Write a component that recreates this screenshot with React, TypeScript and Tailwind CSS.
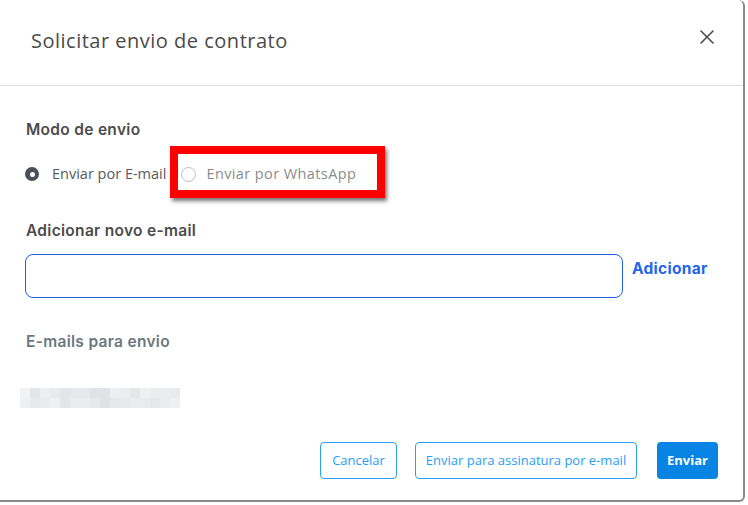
import React from 'react';

const body = '"Open Sans", "Lato", sans-serif';
const heading = '"Inter", "Noto Sans", sans-serif';

const blurRow1 = ['#f1f2f3', '#e4e6e7', '#eceeef', '#e8eaeb', '#e2e6e6', '#e6e8e9', '#e6e8e9', '#dfe3e3', '#dfe3e3', '#eceef0', '#eaeced', '#e5e7e8', '#eff1f1', '#eaeced', '#eaeced', '#e8eaeb'];
const blurRow2 = ['#eef0f1', '#e7e9ea', '#e9ebec', '#eef0f1', '#e3e6e7', '#eaeced', '#eaeced', '#e6e8e9', '#dee2e2', '#e6e8e9', '#e7e9ea', '#eaeced', '#e9ecec', '#e5e7e8', '#eaeced', '#eff0f1'];

export default function App() {
  return (
    <div className="w-[748px] h-[505px] bg-white overflow-hidden">
      <div className="relative w-[745px] h-[502px] bg-white border-r-2 border-b-2 border-[#8a8a8a] rounded-br-[6px] rounded-tr-[6px]">
        {/* header */}
        <div className="flex items-center justify-between h-[86px] pl-[31px] pr-[29px] border-b border-[#dcdcdc]">
          <h2 className="text-[20px] tracking-[0.5px] text-[#4a4a4a] mt-[-4px]" style={{ fontFamily: body }}>
            Solicitar envio de contrato
          </h2>
          <svg width="14" height="14" viewBox="0 0 14 14" className="mt-[-11px]">
            <path d="M1 1 L13 13 M13 1 L1 13" stroke="#4b4b4b" strokeWidth="1.6" strokeLinecap="round" />
          </svg>
        </div>

        {/* body */}
        <div className="pl-[25px] pr-[24px] pt-[32px]">
          <div className="text-[15.5px] font-semibold tracking-[0.3px] text-[#4b4b4b] pl-[1px]" style={{ fontFamily: heading }}>
            Modo de envio
          </div>

          <div className="flex items-center mt-[22px] h-[22px]" style={{ fontFamily: body }}>
            <span className="w-[14px] h-[14px] rounded-full bg-[#4b5058] flex items-center justify-center">
              <span className="w-[5px] h-[5px] rounded-full bg-white" />
            </span>
            <span className="ml-[13px] text-[14.5px] text-[#555a60]">Enviar por E-mail</span>
            <span className="ml-[15px] w-[15px] h-[15px] rounded-full border border-[#b8bcc0] bg-white" />
            <span className="ml-[10px] text-[14.5px] tracking-[0.4px] text-[#8a8c8e]">Enviar por WhatsApp</span>
          </div>

          <div className="text-[15.5px] font-semibold tracking-[0.3px] text-[#4b4b4b] mt-[34px] pl-[1px]" style={{ fontFamily: heading }}>
            Adicionar novo e-mail
          </div>

          <div className="flex items-start mt-[11px]">
            <input className="w-[598px] h-[44px] rounded-[8px] border border-[#1d5ee0] outline-none px-3" />
            <button className="ml-[9px] mt-[3px] text-[15.5px] font-bold tracking-[0.3px] text-[#2366e8]" style={{ fontFamily: heading }}>
              Adicionar
            </button>
          </div>

          <div className="text-[15.5px] font-semibold tracking-[0.3px] text-[#6b777f] mt-[32px] pl-[1px]" style={{ fontFamily: heading }}>
            E-mails para envio
          </div>

          <div className="mt-[35px] ml-[-5px] w-[160px]">
            <div className="flex">
              {blurRow1.map((c, i) => (
                <span key={i} className="w-[10px] h-[10px]" style={{ backgroundColor: c }} />
              ))}
            </div>
            <div className="flex">
              {blurRow2.map((c, i) => (
                <span key={i} className="w-[10px] h-[10px]" style={{ backgroundColor: c }} />
              ))}
            </div>
          </div>
        </div>

        {/* footer */}
        <div className="flex justify-end pr-[25px] mt-[34px]" style={{ fontFamily: body }}>
          <button className="w-[77px] h-[37px] rounded-[4px] border border-[#2a9df4] text-[13px] text-[#2a9df4] bg-white">
            Cancelar
          </button>
          <button className="ml-[18px] w-[222px] h-[37px] rounded-[4px] border border-[#2a9df4] text-[13px] text-[#2a9df4] bg-white">
            Enviar para assinatura por e-mail
          </button>
          <button className="ml-[20px] w-[61px] h-[37px] rounded-[4px] bg-[#0784e4] text-[13px] font-bold text-white">
            Enviar
          </button>
        </div>

        {/* red annotation box */}
        <div className="absolute left-[170px] top-[146px] w-[215px] h-[52px] border-[8px] border-[#ff0000] shadow-[2px_3px_4px_rgba(0,0,0,0.55)]" />
      </div>
    </div>
  );
}
